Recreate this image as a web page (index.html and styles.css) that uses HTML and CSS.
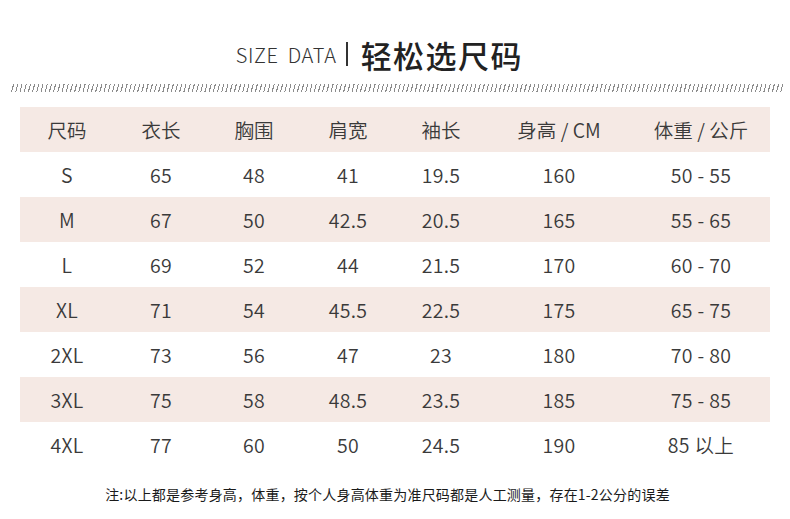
FILE: index.html
```html
<!DOCTYPE html>
<html>
<head>
<meta charset="utf-8">
<link rel="stylesheet" href="styles.css">
</head>
<body>
<div class="page">
  <h1 class="title"><span class="en">SIZE DATA</span><span class="bar"></span><span class="cn">轻松选尺码</span></h1>
  <div class="hatch"></div>
  <table class="size">
    <thead>
      <tr class="shade"><th>尺码</th><th>衣长</th><th>胸围</th><th>肩宽</th><th>袖长</th><th>身高 / CM</th><th>体重 / 公斤</th></tr>
    </thead>
    <tbody>
      <tr><td>S</td><td>65</td><td>48</td><td>41</td><td>19.5</td><td>160</td><td>50 - 55</td></tr>
      <tr class="shade"><td>M</td><td>67</td><td>50</td><td>42.5</td><td>20.5</td><td>165</td><td>55 - 65</td></tr>
      <tr><td>L</td><td>69</td><td>52</td><td>44</td><td>21.5</td><td>170</td><td>60 - 70</td></tr>
      <tr class="shade"><td>XL</td><td>71</td><td>54</td><td>45.5</td><td>22.5</td><td>175</td><td>65 - 75</td></tr>
      <tr><td>2XL</td><td>73</td><td>56</td><td>47</td><td>23</td><td>180</td><td>70 - 80</td></tr>
      <tr class="shade"><td>3XL</td><td>75</td><td>58</td><td>48.5</td><td>23.5</td><td>185</td><td>75 - 85</td></tr>
      <tr><td>4XL</td><td>77</td><td>60</td><td>50</td><td>24.5</td><td>190</td><td>85 以上</td></tr>
    </tbody>
  </table>
  <p class="note">注:以上都是参考身高，体重，按个人身高体重为准尺码都是人工测量，存在1-2公分的误差</p>
</div>
</body>
</html>
```
FILE: styles.css
```css
html, body { margin: 0; padding: 0; background: #fff; }
body { font-family: "Noto Sans CJK SC", "Noto Sans", sans-serif; color: #3a3a3a; }
.page { width: 790px; height: 519px; overflow: hidden; }
.title {
  margin: 0; padding: 33px 31px 0 0; height: 42px;
  display: flex; justify-content: center; align-items: center;
  font-weight: normal;
}
.title .en { font-size: 20px; font-weight: 300; color: #333; letter-spacing: 0.6px; word-spacing: 4px; }
.title .bar { width: 2px; height: 24px; background: #333; margin: 0 13px 0 9px; }
.title .cn { font-size: 31px; font-weight: 500; color: #222; letter-spacing: 1.5px; }
.hatch {
  margin: 9px 0 0 10px; width: 774px; height: 8px;
  background: repeating-linear-gradient(105deg, transparent 0, transparent 3px, #8c8c8c 3px, #8c8c8c 4.06px);
}
.size {
  margin: 15px 0 0 20px; width: 750px;
  border-collapse: collapse; table-layout: fixed;
}
.size th, .size td {
  height: 45px; padding: 0; text-align: center;
  font-size: 19.5px; font-weight: 350; color: #3a3a3a;
}
.size td { letter-spacing: 0.3px; }
.size th { font-weight: 350; }
.size tr.shade { background: #f5e9e4; }
.size th:nth-child(1) { width: 94px; }
.size th:nth-child(2) { width: 94px; }
.size th:nth-child(3) { width: 92px; }
.size th:nth-child(4) { width: 96px; }
.size th:nth-child(5) { width: 90px; }
.size th:nth-child(6) { width: 146px; }
.size th:nth-child(7) { width: 138px; }
.note {
  margin: 17px 0 0 0; padding-right: 15px; text-align: center; font-size: 14px; color: #1a1a1a;
  letter-spacing: 0.2px;
}
```
